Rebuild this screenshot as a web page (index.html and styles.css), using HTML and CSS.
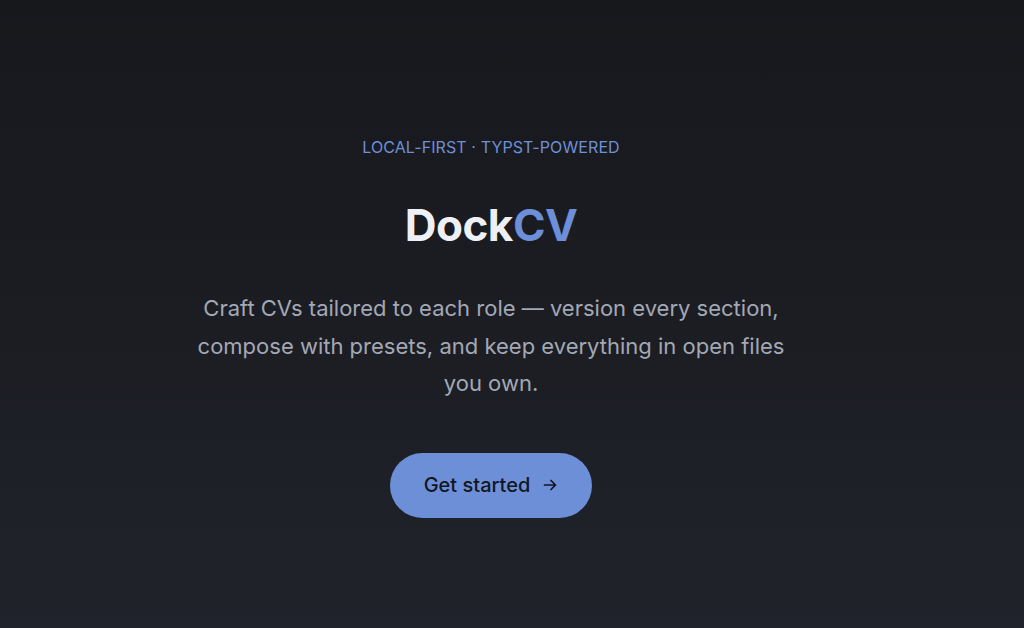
FILE: index.html
```html
<!DOCTYPE html>
<html lang="en">
<head>
<meta charset="utf-8">
<title>DockCV</title>
<link rel="stylesheet" href="styles.css">
</head>
<body>
<main class="hero">
  <p class="eyebrow">LOCAL-FIRST · TYPST-POWERED</p>
  <h1 class="title">Dock<span class="accent">CV</span></h1>
  <p class="lead">Craft CVs tailored to each role — version every section, compose with presets, and keep everything in open files you own.</p>
  <a class="cta" href="#">Get started <span class="arrow">
    <svg width="16" height="16" viewBox="0 0 16 16" fill="none" stroke="currentColor" stroke-width="1.7" stroke-linecap="round" stroke-linejoin="round"><path d="M2.5 8h11M9 3.5L13.5 8 9 12.5"/></svg>
  </span></a>
</main>
</body>
</html>
```
FILE: styles.css
```css
html, body {
  margin: 0;
  height: 100%;
}
body {
  background: linear-gradient(180deg, #16181c 0%, #1c1e24 60%, #20232b 100%);
  font-family: Inter, "Noto Sans", sans-serif;
  color: #eef0f6;
}
.hero {
  box-sizing: border-box;
  height: 100%;
  display: flex;
  flex-direction: column;
  align-items: center;
  padding: 137px 42px 0 0;
  text-align: center;
}
.eyebrow {
  margin: 0;
  font-size: 16px;
  line-height: 20px;
  letter-spacing: 0.1px;
  color: #6e90d8;
}
.title {
  margin: 40px 0 0;
  font-size: 44px;
  line-height: 56px;
  font-weight: 700;
  letter-spacing: -0.5px;
  color: #eef0f6;
}
.accent {
  color: #6d8fd9;
}
.lead {
  margin: 37px 0 0;
  max-width: 600px;
  font-size: 22px;
  line-height: 37.5px;
  color: #a3a8b5;
}
.cta {
  margin-top: 50px;
  display: inline-flex;
  align-items: center;
  gap: 12px;
  height: 65px;
  padding: 0 34px;
  border-radius: 999px;
  background: #6d8fd8;
  color: #121620;
  font-size: 20px;
  font-weight: 500;
  text-decoration: none;
}
.arrow {
  display: inline-flex;
}
```
